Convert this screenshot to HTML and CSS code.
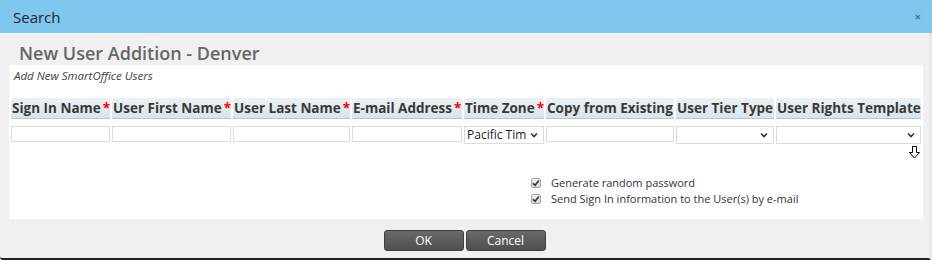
FILE: index.html
```html
<!DOCTYPE html>
<html>
<head>
<meta charset="utf-8">
<link rel="stylesheet" href="styles.css">
</head>
<body>
<div class="dialog">
  <div class="titlebar">
    <span class="title">Search</span>
    <span class="close">&#215;</span>
  </div>
  <h1 class="heading">New User Addition - Denver</h1>
  <div class="panel">
    <div class="subtitle">Add New SmartOffice Users</div>
    <table class="grid">
      <thead>
        <tr>
          <th class="c1">Sign In Name<span class="req">*</span></th>
          <th class="c2">User First Name<span class="req">*</span></th>
          <th class="c3">User Last Name<span class="req">*</span></th>
          <th class="c4">E-mail Address<span class="req">*</span></th>
          <th class="c5">Time Zone<span class="req">*</span></th>
          <th class="c6">Copy from Existing</th>
          <th class="c7">User Tier Type</th>
          <th class="c8">User Rights Template</th>
        </tr>
      </thead>
      <tbody>
        <tr>
          <td><input class="txt" type="text"></td>
          <td><input class="txt" type="text"></td>
          <td><input class="txt" type="text"></td>
          <td><input class="txt" type="text"></td>
          <td><div class="sel"><span class="sel-text">Pacific Time</span><svg class="chev" width="8" height="6" viewBox="0 0 8 6"><path d="M1 1.5 L4 4.5 L7 1.5" fill="none" stroke="#333" stroke-width="1.6"/></svg></div></td>
          <td><input class="txt" type="text"></td>
          <td><div class="sel"><span class="sel-text"></span><svg class="chev" width="8" height="6" viewBox="0 0 8 6"><path d="M1 1.5 L4 4.5 L7 1.5" fill="none" stroke="#333" stroke-width="1.6"/></svg></div></td>
          <td class="last"><div class="sel"><span class="sel-text"></span><svg class="chev" width="8" height="6" viewBox="0 0 8 6"><path d="M1 1.5 L4 4.5 L7 1.5" fill="none" stroke="#333" stroke-width="1.6"/></svg></div>
            <svg class="cursor" width="11" height="13" viewBox="0 0 11 13"><path d="M3.5 0.5 H7.5 V6.5 H10.5 L5.5 12 L0.5 6.5 H3.5 Z" fill="#fff" stroke="#000" stroke-width="1"/></svg>
          </td>
        </tr>
      </tbody>
    </table>
    <div class="options">
      <label class="opt"><span class="cb"><svg width="8" height="8" viewBox="0 0 8 8"><path d="M1 4.2 L3 6.3 L7 1.5" fill="none" stroke="#333" stroke-width="1.6"/></svg></span>Generate random password</label>
      <label class="opt"><span class="cb"><svg width="8" height="8" viewBox="0 0 8 8"><path d="M1 4.2 L3 6.3 L7 1.5" fill="none" stroke="#333" stroke-width="1.6"/></svg></span>Send Sign In information to the User(s) by e-mail</label>
    </div>
  </div>
  <div class="buttons">
    <button class="btn">OK</button>
    <button class="btn">Cancel</button>
  </div>
</div>
</body>
</html>
```
FILE: styles.css
```css
html, body {
  margin: 0;
  padding: 0;
}
body {
  background: #ffffff;
  font-family: "Open Sans", "Noto Sans", sans-serif;
  width: 932px;
  height: 261px;
  overflow: hidden;
}
.dialog {
  width: 932px;
  height: 260px;
  box-sizing: border-box;
  background: #f0f0f0;
  border-bottom: 2px solid #222;
  border-right: 3px solid #e6e6e6;
  border-radius: 0 0 3px 3px;
  display: flex;
  flex-direction: column;
}
.titlebar {
  height: 33px;
  flex: none;
  background: #7fc7ec;
  display: flex;
  align-items: center;
  justify-content: space-between;
  padding: 0 11px 0 13px;
  margin-right: -3px;
}
.title {
  font-size: 15px;
  color: #1c2730;
}
.close {
  font-size: 11px;
  font-weight: bold;
  color: #4d6c82;
}
.heading {
  margin: 0;
  padding: 8px 0 0 19px;
  height: 24px;
  line-height: 24px;
  font-size: 18px;
  font-weight: 600;
  color: #676767;
}
.panel {
  background: #fff;
  margin: 0 6px 0 9px;
  height: 154px;
  position: relative;
}
.subtitle {
  font-size: 11.5px;
  font-style: italic;
  color: #444;
  padding: 4px 0 0 5px;
  line-height: 14px;
}
.grid {
  width: 100%;
  border-collapse: separate;
  border-spacing: 2px;
  margin-top: 13px;
  table-layout: fixed;
}
.grid th {
  height: 20px;
  padding: 0 0 0 1px;
  text-align: left;
  font-size: 13.5px;
  font-weight: bold;
  color: #3c3832;
  white-space: nowrap;
  overflow: hidden;
  background: linear-gradient(#e9f1f6, #d8e5ed);
  border-bottom: 1px solid #b9c4cb;
  border-radius: 2px 2px 0 0;
  line-height: 20px;
}
.c1 { width: 98px; }
.c2 { width: 118px; }
.c3 { width: 116px; }
.c4 { width: 109px; }
.c5 { width: 79px; }
.c6 { width: 127px; }
.c7 { width: 97px; }
.req {
  color: #f00;
  padding-left: 2px;
}
.grid td {
  padding: 5px 0 0 0;
  vertical-align: top;
  height: 22px;
}
.grid td.last {
  position: relative;
}
.txt {
  display: block;
  width: 100%;
  height: 16px;
  box-sizing: border-box;
  border: 1px solid #dcdcdc;
  margin: 0;
  padding: 0 2px;
  background: #fff;
}
.sel {
  display: flex;
  align-items: center;
  height: 18px;
  box-sizing: border-box;
  border: 1px solid #dcdcdc;
  background: #fff;
  padding: 0 5px 0 2px;
  font-size: 12px;
  color: #1e1e1e;
}
.sel-text {
  flex: 1;
  overflow: hidden;
  white-space: nowrap;
  text-overflow: clip;
  line-height: 16px;
}
.chev {
  flex: none;
  margin-left: 4px;
}
.cursor {
  position: absolute;
  right: 1px;
  top: 25px;
}
.options {
  padding: 25px 0 0 522px;
  display: flex;
  flex-direction: column;
}
.opt {
  display: flex;
  align-items: center;
  font-size: 11px;
  color: #333;
  height: 16px;
  line-height: 16px;
}
.cb {
  width: 10px;
  height: 10px;
  box-sizing: border-box;
  border: 1px solid #a9a9a9;
  border-radius: 2px;
  background: linear-gradient(#f4f4f4, #d6d6d6);
  display: flex;
  align-items: center;
  justify-content: center;
  margin-right: 10px;
}
.cb svg {
  display: block;
}
.buttons {
  display: flex;
  justify-content: center;
  gap: 2px;
  padding-top: 11px;
  padding-right: 0;
}
.btn {
  width: 80px;
  height: 21px;
  box-sizing: border-box;
  margin: 0;
  padding: 0;
  border: 1px solid #3f3f3f;
  border-radius: 3px;
  background: linear-gradient(#6a6a6a, #4e4e4e);
  color: #fff;
  font-family: "Open Sans", "Noto Sans", sans-serif;
  font-size: 12px;
  line-height: 19px;
}
```
